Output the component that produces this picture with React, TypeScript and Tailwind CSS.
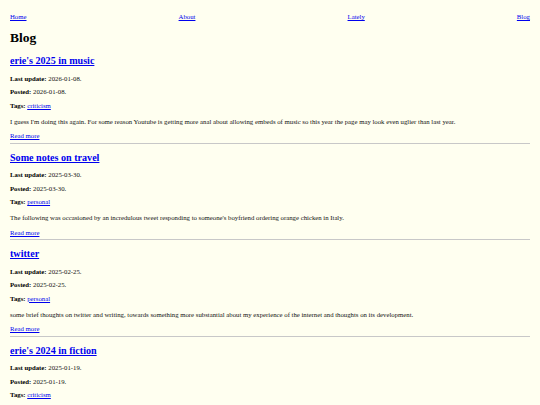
const posts = [
  {
    title: "erie's 2025 in music",
    updated: '2026-01-08.',
    posted: '2026-01-08.',
    tag: 'criticism',
    summary:
      "I guess I'm doing this again. For some reason Youtube is getting more anal about allowing embeds of music so this year the page may look even uglier than last year.",
  },
  {
    title: 'Some notes on travel',
    updated: '2025-03-30.',
    posted: '2025-03-30.',
    tag: 'personal',
    summary:
      "The following was occasioned by an incredulous tweet responding to someone's boyfriend ordering orange chicken in Italy.",
  },
  {
    title: 'twitter',
    updated: '2025-02-25.',
    posted: '2025-02-25.',
    tag: 'personal',
    summary:
      'some brief thoughts on twitter and writing, towards something more substantial about my experience of the internet and thoughts on its development.',
  },
  {
    title: "erie's 2024 in fiction",
    updated: '2025-01-19.',
    posted: '2025-01-19.',
    tag: 'criticism',
    summary: 'A look back at what I read last year.',
  },
]

const link = 'text-[#0000ee] underline'

export default function App() {
  return (
    <div className="min-h-[405px] bg-[#fffff0] px-[10px] pt-[13px] font-['Liberation_Serif',serif] text-[6.75px] leading-[8px] text-[#111]">
      <nav className="flex justify-between">
        <a href="#" className={link}>Home</a>
        <a href="#" className={link}>About</a>
        <a href="#" className={link}>Lately</a>
        <a href="#" className={link}>Blog</a>
      </nav>
      <h1 className="mt-[9px] text-[13.5px] font-bold leading-[16px] text-black">Blog</h1>
      <div className="mt-[9px] flex flex-col">
        {posts.map((p) => (
          <div key={p.title} className="flex flex-col">
            <h2 className="text-[10.1px] font-bold leading-[12px]">
              <a href="#" className={link}>{p.title}</a>
            </h2>
            <p className="mt-[7.5px]">
              <b className="text-black">Last update:</b> {p.updated}
            </p>
            <p className="mt-[5.5px]">
              <b className="text-black">Posted:</b> {p.posted}
            </p>
            <p className="mt-[5.5px]">
              <b className="text-black">Tags:</b> <a href="#" className={link}>{p.tag}</a>
            </p>
            <p className="mt-[8px]">{p.summary}</p>
            <a href="#" className={`${link} mt-[6.5px] self-start`}>Read more</a>
            <hr className="mt-[2.5px] mb-[8px] border-t border-[#c8c8c8]" />
          </div>
        ))}
      </div>
    </div>
  )
}
